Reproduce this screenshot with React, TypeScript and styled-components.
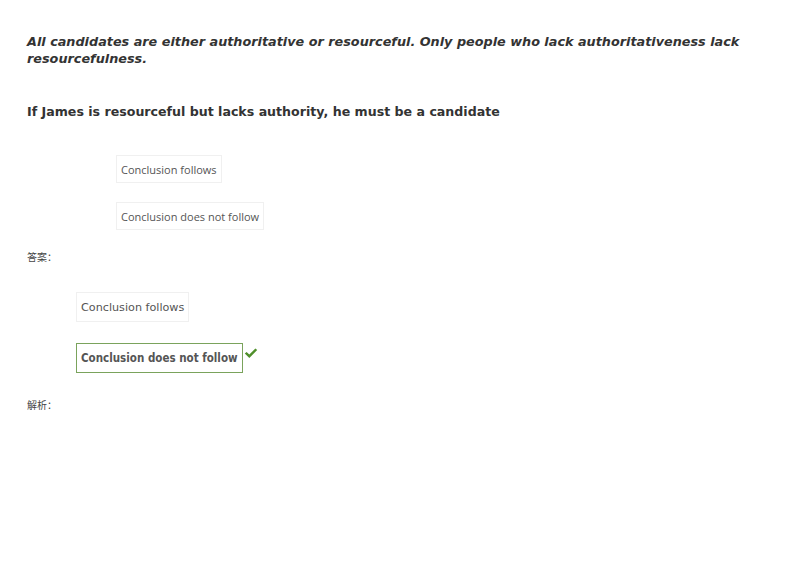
import React from 'react';
import styled, { createGlobalStyle } from 'styled-components';

const GlobalStyle = createGlobalStyle`
  html, body {
    margin: 0;
    padding: 0;
    background: #fff;
  }
`;

const options = ['Conclusion follows', 'Conclusion does not follow'];
const correctIndex = 1;

const App: React.FC = () => {
  return (
    <Page>
      <GlobalStyle />
      <Premise>
        All candidates are either authoritative or resourceful. Only people who lack authoritativeness lack
        resourcefulness.
      </Premise>
      <Statement>If James is resourceful but lacks authority, he must be a candidate</Statement>

      <ChoiceList>
        {options.map((opt) => (
          <Choice key={opt}>{opt}</Choice>
        ))}
      </ChoiceList>

      <Label>答案：</Label>

      <AnswerList>
        {options.map((opt, i) => (
          <AnswerRow key={opt}>
            <Answer correct={i === correctIndex}>{opt}</Answer>
            {i === correctIndex && (
              <Check viewBox="0 0 14 11" width="14" height="11">
                <path d="M0.8 5.6 L2.6 3.9 L5.3 6.4 L11.4 0.4 L13.2 2.1 L5.3 9.9 Z" fill="#4f8f2a" />
              </Check>
            )}
          </AnswerRow>
        ))}
      </AnswerList>

      <Label>解析：</Label>
    </Page>
  );
};

const Page = styled.div`
  padding: 33px 27px 0 27px;
  color: #333;
  font-family: 'DejaVu Sans', Verdana, sans-serif;
`;

const Premise = styled.div`
  font-size: 12.8px;
  font-weight: 700;
  font-style: italic;
  line-height: 17px;
  color: #333;
`;

const Statement = styled.div`
  margin-top: 36px;
  font-size: 12.6px;
  font-weight: 700;
  line-height: 17px;
  color: #333;
`;

const ChoiceList = styled.div`
  display: flex;
  flex-direction: column;
  align-items: flex-start;
  gap: 19px;
  margin: 35px 0 0 89px;
`;

const Choice = styled.div`
  height: 28px;
  box-sizing: border-box;
  padding: 0 4px;
  display: flex;
  align-items: center;
  border: 1px solid #f0f0f0;
  font-family: 'Open Sans', sans-serif;
  font-size: 11px;
  color: #555;
`;

const Label = styled.div`
  margin-top: 20px;
  font-family: 'Noto Sans CJK SC', sans-serif;
  font-size: 10px;
  line-height: 14px;
  color: #444;
`;

const AnswerList = styled.div`
  display: flex;
  flex-direction: column;
  align-items: flex-start;
  gap: 21px;
  margin: 28px 0 25px 49px;
`;

const AnswerRow = styled.div`
  display: flex;
  align-items: flex-start;
  gap: 1px;
`;

const Answer = styled.div<{ correct: boolean }>`
  height: 30px;
  box-sizing: border-box;
  padding: 0 4px;
  display: flex;
  align-items: center;
  border: 1px solid ${(p) => (p.correct ? '#7aa35c' : '#f0f0f0')};
  font-family: ${(p) =>
    p.correct ? "'DejaVu Sans Condensed', 'DejaVu Sans', sans-serif" : "'DejaVu Sans', Verdana, sans-serif"};
  font-size: ${(p) => (p.correct ? '11.5px' : '11.2px')};
  font-weight: ${(p) => (p.correct ? 700 : 400)};
  color: #555;
`;

const Check = styled.svg`
  margin-top: 5px;
  display: block;
`;

export default App;
